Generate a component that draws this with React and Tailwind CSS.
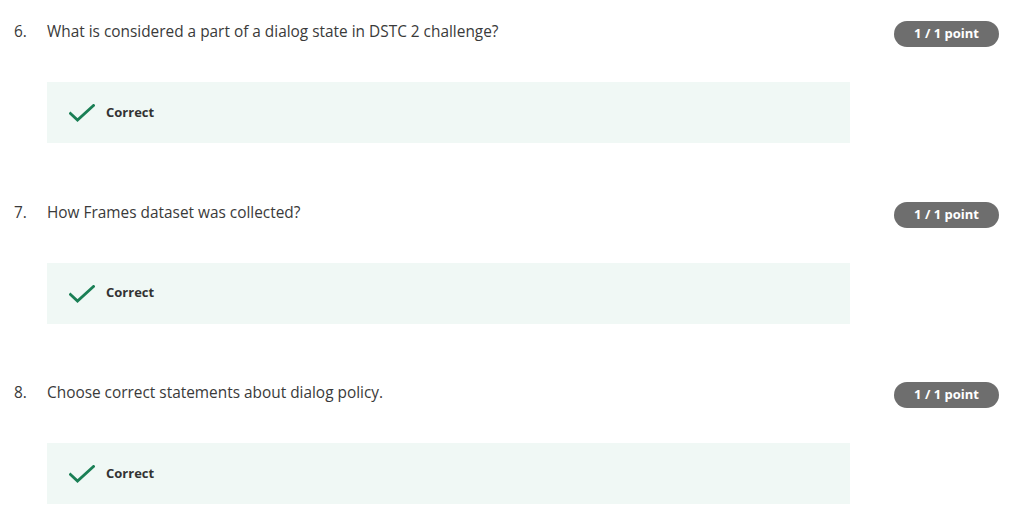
import React from "react";

const items = [
  { n: "6.", q: "What is considered a part of a dialog state in DSTC 2 challenge?" },
  { n: "7.", q: "How Frames dataset was collected?" },
  { n: "8.", q: "Choose correct statements about dialog policy." },
];

function Check() {
  return (
    <svg width="26" height="18" viewBox="0 0 26 18" fill="none">
      <path d="M1.5 9.5 L8.5 16 L24.5 1.5" stroke="#1a7f55" strokeWidth="2.8" strokeLinecap="square" strokeLinejoin="miter" />
    </svg>
  );
}

export default function App() {
  return (
    <div className="w-[1009px] h-[516px] bg-white overflow-hidden pt-[20px]" style={{ fontFamily: '"Open Sans", sans-serif' }}>
      {items.map((it) => (
        <div key={it.n} className="mb-[57.5px]">
          <div className="flex justify-between items-start h-[27px] pr-[10px]">
            <div className="flex text-[15.4px] leading-[24px] text-[#3a3a3a]">
              <span className="w-[47px] pl-[14px]">{it.n}</span>
              <span>{it.q}</span>
            </div>
            <div className="mt-px h-[26px] w-[105px] rounded-full bg-[#6e6e6e] text-white text-[13px] font-bold flex items-center justify-center">
              1 / 1 point
            </div>
          </div>
          <div className="ml-[47px] mt-[35px] w-[803px] h-[61px] bg-[#f0f8f5] flex items-center pl-[22px]">
            <span className="mt-[1px]"><Check /></span>
            <span className="ml-[11px] text-[13px] font-bold text-[#333333]">Correct</span>
          </div>
        </div>
      ))}
    </div>
  );
}
